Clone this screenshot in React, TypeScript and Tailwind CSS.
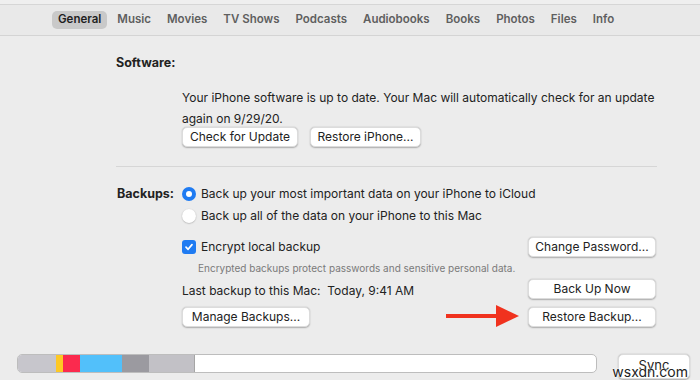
import React from "react";

const tabs = ["General", "Music", "Movies", "TV Shows", "Podcasts", "Audiobooks", "Books", "Photos", "Files", "Info"];

function MacButton({ children, className = "" }: { children: React.ReactNode; className?: string }) {
  return (
    <button
      className={
        "h-[20px] rounded-[5px] bg-white text-[12px] leading-none text-[#222] whitespace-nowrap shadow-[0_0.5px_1.5px_rgba(0,0,0,0.28)] border border-[#dcdcdc] flex items-center justify-center " +
        className
      }
    >
      {children}
    </button>
  );
}

function Radio({ checked }: { checked?: boolean }) {
  if (checked) {
    return (
      <span className="w-[14px] h-[14px] rounded-full bg-[#1f7bf2] flex items-center justify-center">
        <span className="w-[6px] h-[6px] rounded-full bg-white" />
      </span>
    );
  }
  return <span className="w-[14px] h-[14px] rounded-full bg-white shadow-[0_0.5px_1.5px_rgba(0,0,0,0.3)]" />;
}

export default function App() {
  return (
    <div
      className="w-[700px] h-[380px] overflow-hidden bg-[#ececec] text-[#222] relative"
      style={{ fontFamily: "Inter, 'Liberation Sans', Arial, sans-serif" }}
    >
      {/* Tab bar */}
      <div className="h-[5px] bg-[#efefef] border-b border-[#d6d6d6]" />
      <div className="h-[31px] bg-[#e9e9e9] border-b border-[#d4d4d4] flex items-center pl-[52px] gap-[4px]">
        {tabs.map((t) => (
          <span
            key={t}
            className={
              "h-[18px] px-[6px] rounded-[5px] flex items-center whitespace-nowrap text-[11.5px] font-semibold " +
              (t === "General" ? "bg-[#c9c9c9] text-[#1e1e1e]" : "text-[#5f5f5f]")
            }
          >
            {t}
          </span>
        ))}
      </div>

      {/* Software */}
      <div className="pl-[116px] pt-[18px]">
        <div className="text-[12.5px] font-bold leading-[18px]">Software:</div>
        <div className="pl-[66px] pt-[15px] text-[12px] leading-[21px] w-[560px]">
          Your iPhone software is up to date. Your Mac will automatically check for an update again on 9/29/20.
        </div>
        <div className="pl-[66px] mt-[-2px] flex gap-[12px]">
          <MacButton className="w-[116px]">Check for Update</MacButton>
          <MacButton className="w-[111px]">Restore iPhone...</MacButton>
        </div>
        <div className="mt-[19px] mr-[43px] border-t border-[#d6d6d6]" />
      </div>

      {/* Backups */}
      <div className="pl-[117px] pt-[19px] pr-[44px] text-[12px]">
        <div className="flex items-center h-[16px]">
          <span className="w-[65px] text-[12.5px] font-bold">Backups:</span>
          <Radio checked />
          <span className="ml-[5px]">Back up your most important data on your iPhone to iCloud</span>
        </div>
        <div className="flex items-center h-[16px] mt-[6px] pl-[65px]">
          <Radio />
          <span className="ml-[5px]">Back up all of the data on your iPhone to this Mac</span>
        </div>

        <div className="flex items-center justify-between mt-[13px] pl-[65px] h-[20px]">
          <div className="flex items-center">
            <span className="w-[14px] h-[14px] rounded-[3px] bg-[#1f7bf2] flex items-center justify-center">
              <svg width="10" height="10" viewBox="0 0 10 10">
                <path d="M2 5.2 L4.1 7.3 L8 2.6" fill="none" stroke="white" strokeWidth="1.7" strokeLinecap="round" strokeLinejoin="round" />
              </svg>
            </span>
            <span className="ml-[5px]">Encrypt local backup</span>
          </div>
          <MacButton className="w-[128px]">Change Password...</MacButton>
        </div>
        <div className="pl-[81px] mt-[4px] text-[10px] text-[#7a7a7a] leading-[14px]">
          Encrypted backups protect passwords and sensitive personal data.
        </div>

        <div className="flex items-center justify-between mt-[4px] pl-[65px] h-[20px]">
          <span className="pt-[3px]">Last backup to this Mac:&nbsp; Today, 9:41 AM</span>
          <MacButton className="w-[128px]">Back Up Now</MacButton>
        </div>
        <div className="flex items-center justify-between mt-[8px] pl-[65px] h-[20px]">
          <MacButton className="w-[128px]">Manage Backups...</MacButton>
          <div className="flex items-center gap-[8px]">
            <svg width="74" height="24" viewBox="0 0 74 24" className="-mt-[2px]">
              <rect x="0" y="10" width="52" height="4" fill="#f0321e" />
              <path d="M50 1 L73 12 L50 23 Z" fill="#f0321e" />
            </svg>
            <MacButton className="w-[128px]">Restore Backup...</MacButton>
          </div>
        </div>
      </div>

      {/* Storage bar */}
      <div className="flex items-start pl-[17px] pr-[10px] mt-[27px] gap-[21px]">
        <div className="flex w-[580px] h-[19px] rounded-[5px] overflow-hidden border border-[#bdbdbd] bg-white">
          <div className="w-[38px] bg-[#c7c6cc]" />
          <div className="w-[7px] bg-[#fdc824]" />
          <div className="w-[17px] bg-[#fb2a4e]" />
          <div className="w-[42px] bg-[#52c0fa]" />
          <div className="w-[27px] bg-[#9b9aa0]" />
          <div className="w-[46px] bg-[#c2c1c6] border-r border-[#a5a5a5]" />
        </div>
        <MacButton className="w-[72px] h-[25px] items-start pt-[4px] text-[13px]">Sync</MacButton>
      </div>

      <span className="absolute right-[12px] bottom-[1px] text-[14px] leading-none text-[#222] [text-shadow:0_0_2px_#fff,0_0_2px_#fff]">
        wsxdn.com
      </span>
    </div>
  );
}
